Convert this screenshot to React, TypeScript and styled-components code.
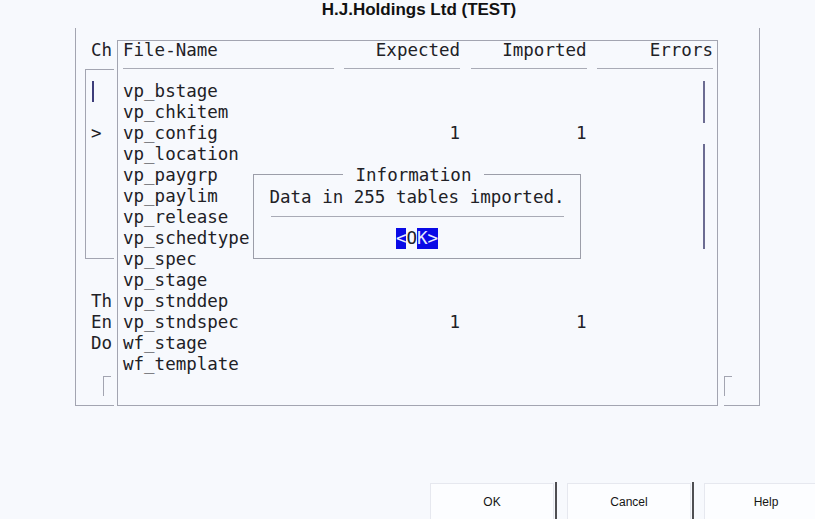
import styled, { createGlobalStyle } from "styled-components";

const bg = "#f7f9fd";
const line = "#a3a5b1";
const ink = "#212126";

const GlobalStyle = createGlobalStyle`
  html, body {
    margin: 0;
    padding: 0;
    background: ${bg};
  }
`;

const Screen = styled.div`
  width: 815px;
  height: 519px;
  overflow: hidden;
  background: ${bg};
  color: ${ink};
  font-family: "DejaVu Sans Mono", monospace;
  font-size: 17.5px;
`;

const Title = styled.h1`
  margin: 0;
  height: 28px;
  padding-left: 23px;
  text-align: center;
  font: bold 17px/20px "Liberation Sans", Arial, sans-serif;
  color: #111;
`;

const Frame = styled.div`
  display: flex;
  margin-left: 75px;
  width: 685px;
  height: 378px;
  box-sizing: border-box;
  border-left: 1px solid ${line};
  border-right: 1px solid ${line};
`;

const SidePanel = styled.div`
  display: flex;
  flex-direction: column;
  width: 38px;
  flex-shrink: 0;
  box-sizing: border-box;
  border-bottom: 1px solid ${line};
  overflow: hidden;
  white-space: pre;
`;

const RightPanel = styled(SidePanel)`
  width: auto;
  flex: 1;
  margin-left: 6px;
`;

const PanelHeader = styled.div`
  margin-top: 13px;
  padding-left: 15px;
  line-height: 18px;
`;

const ChoiceBox = styled.div`
  margin: 10px 0 0 9px;
  height: 190px;
  box-sizing: border-box;
  border-top: 1px solid ${line};
  border-left: 1px solid ${line};
  border-bottom: 1px solid ${line};
  padding: 11px 0 0 5px;
`;

const Line = styled.div`
  height: 21px;
  line-height: 21px;
`;

const CursorBar = styled.div`
  width: 2px;
  height: 21px;
  margin-left: 1px;
  background: #3d3d7a;
`;

const CutRows = styled.div`
  margin-top: 32px;
  padding-left: 15px;
`;

const Corner = styled.div<{ $top: number; $left: number }>`
  margin: ${(p) => p.$top}px 0 0 ${(p) => p.$left}px;
  width: 8px;
  height: 20px;
  box-sizing: border-box;
  border-top: 1px solid ${line};
  border-left: 1px solid ${line};
`;

const Window = styled.div`
  position: relative;
  margin: 12px 0 0 3px;
  width: 601px;
  height: 366px;
  flex-shrink: 0;
  box-sizing: border-box;
  border: 1px solid ${line};
  padding-left: 5px;
  white-space: pre;
`;

const ColGrid = styled.div`
  display: grid;
  grid-template-columns: 20ch 11ch 11ch 11ch;
  column-gap: 1ch;
`;

const HeaderRow = styled(ColGrid)`
  line-height: 18px;
`;

const RuleRow = styled(ColGrid)`
  margin-bottom: 12px;
`;

const Rule = styled.div`
  height: 9px;
  border-bottom: 1px solid #a9abb6;
`;

const DataRow = styled(ColGrid)`
  height: 21px;
  line-height: 21px;
`;

const Cell = styled.div<{ $right?: boolean }>`
  text-align: ${(p) => (p.$right ? "right" : "left")};
`;

const ScrollMark = styled.div<{ $top: number; $height: number }>`
  position: absolute;
  left: 585px;
  top: ${(p) => p.$top}px;
  width: 2px;
  height: ${(p) => p.$height}px;
  background: #6c6c92;
`;

const Dialog = styled.div`
  position: absolute;
  left: 135px;
  top: 133px;
  width: 328px;
  height: 85px;
  box-sizing: border-box;
  border: 1px solid #9c9ea9;
  background: ${bg};
  display: flex;
  flex-direction: column;
  align-items: center;
`;

const DialogTitle = styled.div`
  margin: -9px 7px 0 0;
  padding: 0 13px;
  line-height: 18px;
  background: ${bg};
`;

const Message = styled.div`
  margin-top: 3px;
  line-height: 21px;
`;

const Separator = styled.div`
  margin-top: 8px;
  width: 293px;
  height: 1px;
  background: #a9abb6;
`;

const KeyRow = styled.div`
  margin-top: 11px;
  display: flex;
  height: 21px;
  line-height: 21px;
`;

const Key = styled.span<{ $hot?: boolean }>`
  background: ${(p) => (p.$hot ? "#0a0ae6" : "transparent")};
  color: ${(p) => (p.$hot ? "#e8ecff" : ink)};
`;

const ButtonBar = styled.div`
  display: flex;
  margin-top: 77px;
  padding-left: 430px;
`;

const Button = styled.div`
  width: 124px;
  height: 38px;
  flex-shrink: 0;
  box-sizing: border-box;
  border: 1px solid #e6e8ef;
  background: #fcfdff;
  display: flex;
  align-items: center;
  justify-content: center;
  font: 12px "Liberation Sans", Arial, sans-serif;
  color: #151515;
`;

const Divider = styled.div`
  width: 2px;
  height: 37px;
  flex-shrink: 0;
  margin: -1px 10px 0 1px;
  background: #4e4e52;
`;

type Row = { name: string; expected?: number; imported?: number };

const rows: Row[] = [
  { name: "vp_bstage" },
  { name: "vp_chkitem" },
  { name: "vp_config", expected: 1, imported: 1 },
  { name: "vp_location" },
  { name: "vp_paygrp" },
  { name: "vp_paylim" },
  { name: "vp_release" },
  { name: "vp_schedtype" },
  { name: "vp_spec" },
  { name: "vp_stage" },
  { name: "vp_stnddep" },
  { name: "vp_stndspec", expected: 1, imported: 1 },
  { name: "wf_stage" },
  { name: "wf_template" },
];

const App = () => {
  return (
    <Screen>
      <GlobalStyle />
      <Title>H.J.Holdings Ltd (TEST)</Title>
      <Frame>
        <SidePanel>
          <PanelHeader>Ch</PanelHeader>
          <ChoiceBox>
            <CursorBar />
            <Line />
            <Line>&gt;</Line>
          </ChoiceBox>
          <CutRows>
            <Line>Th</Line>
            <Line>En</Line>
            <Line>Do</Line>
          </CutRows>
          <Corner $top={22} $left={27} />
        </SidePanel>

        <Window>
          <HeaderRow>
            <Cell>File-Name</Cell>
            <Cell $right>Expected</Cell>
            <Cell $right>Imported</Cell>
            <Cell $right>Errors</Cell>
          </HeaderRow>
          <RuleRow>
            <Rule />
            <Rule />
            <Rule />
            <Rule />
          </RuleRow>
          {rows.map((r) => (
            <DataRow key={r.name}>
              <Cell>{r.name}</Cell>
              <Cell $right>{r.expected ?? ""}</Cell>
              <Cell $right>{r.imported ?? ""}</Cell>
              <Cell $right></Cell>
            </DataRow>
          ))}
          <ScrollMark $top={40} $height={42} />
          <ScrollMark $top={103} $height={105} />

          <Dialog>
            <DialogTitle>Information</DialogTitle>
            <Message>Data in 255 tables imported.</Message>
            <Separator />
            <KeyRow>
              <Key $hot>&lt;</Key>
              <Key>O</Key>
              <Key $hot>K&gt;</Key>
            </KeyRow>
          </Dialog>
        </Window>

        <RightPanel>
          <Corner $top={348} $left={0} />
        </RightPanel>
      </Frame>

      <ButtonBar>
        <Button>OK</Button>
        <Divider />
        <Button>Cancel</Button>
        <Divider />
        <Button>Help</Button>
      </ButtonBar>
    </Screen>
  );
};

export default App;
